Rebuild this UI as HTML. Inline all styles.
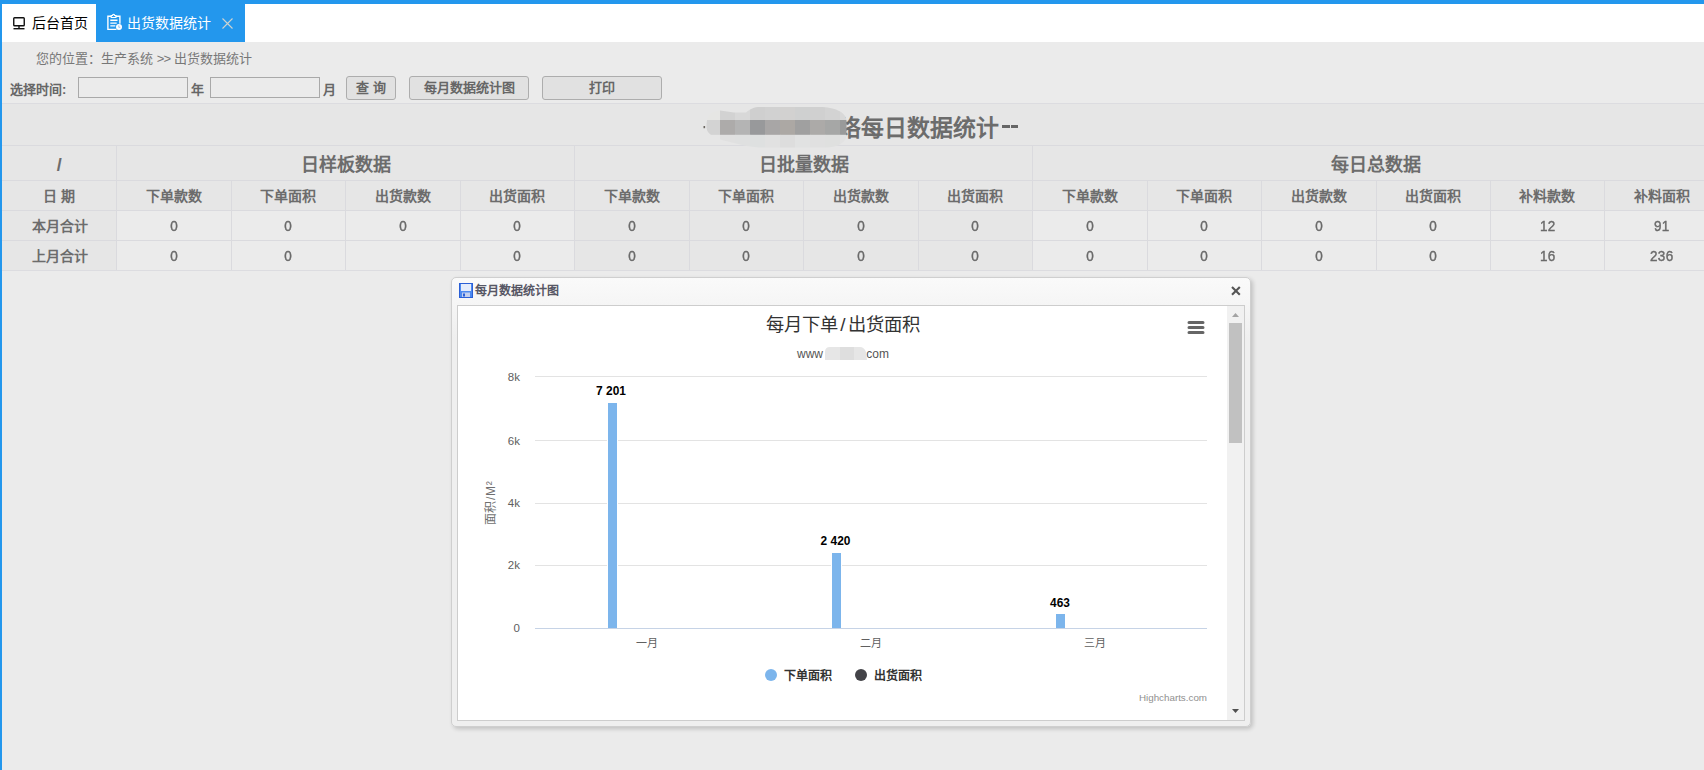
<!DOCTYPE html>
<html lang="zh-CN">
<head>
<meta charset="utf-8">
<title>出货数据统计</title>
<style>
*{box-sizing:border-box;margin:0;padding:0}
html,body{width:1704px;height:770px;overflow:hidden}
body{position:relative;background:#ebebeb;font-family:"Liberation Sans",sans-serif;font-size:13px;color:#666}
.abs{position:absolute}
#topbar{left:0;top:0;width:1704px;height:4px;background:#2397ed}
#leftbar{left:0;top:0;width:2px;height:770px;background:#2397ed}
#tabs{left:2px;top:4px;width:1702px;height:38px;background:#fff}
.tab{position:absolute;top:0;height:38px;font-size:14px;line-height:38px;white-space:nowrap}
#tab1{left:0;width:94px;color:#000}
#tab2{left:94px;width:149px;background:#2397ed;color:#fff}
#crumb{left:36px;top:50px;font-size:13px;line-height:17px;color:#777;white-space:nowrap}
.lbl{position:absolute;font-weight:bold;color:#666;font-size:13px;line-height:17px;white-space:nowrap}
.inp{position:absolute;top:77px;height:21px;width:110px;border:1px solid #a9a9a9;background:#ebebeb}
.btn{position:absolute;top:76px;height:24px;border:1px solid #adadad;border-radius:3px;background:#e1e1e1;color:#666;font-weight:bold;font-size:13px;line-height:22px;text-align:center;white-space:nowrap}
#tbl{left:2px;top:103px;width:1718px;height:168px;background:#e6e6e6;border-top:1px solid #dcdce0;border-bottom:1px solid #dcdce0}
.hl{position:absolute;left:0;width:1718px;height:1px;background:#dadade}
.vl{position:absolute;width:1px;background:#dadade}
.c{position:absolute;text-align:center;font-weight:bold;color:#6c6c6c;white-space:nowrap}
.lite{position:absolute;background:#ebebeb}
#win{left:451px;top:277px;width:800px;height:450px;border:1px solid #cfcfcf;border-radius:5px;background:linear-gradient(to bottom,#fafafa 0,#efefef 60px);box-shadow:2px 2px 4px rgba(0,0,0,.18)}
#wbody{left:5px;top:27px;width:788px;height:416px;border:1px solid #cdcdcd;background:#fff;overflow:hidden}
#sb{left:769px;top:0;width:17px;height:414px;background:#f1f1f1}
</style>
</head>
<body>
<div class="abs" id="tabs">
  <div class="tab" id="tab1">
    <svg class="abs" style="left:11px;top:13px" width="13" height="13" viewBox="0 0 13 13"><rect x="0.75" y="0.75" width="10.5" height="8" rx="0.8" fill="none" stroke="#111" stroke-width="1.4"/><rect x="5.3" y="9" width="1.4" height="2.4" fill="#111"/><rect x="0.5" y="11" width="11" height="1.4" fill="#111"/></svg>
    <span class="abs" style="left:30px;top:0">后台首页</span>
  </div>
  <div class="tab" id="tab2">
    <svg class="abs" style="left:10px;top:9px" width="17" height="18" viewBox="0 0 17 18"><path d="M5.4 3.2H1.9V16.4H10.5M9.6 3.2H13.9V10.8" fill="none" stroke="#fff" stroke-width="1.4"/><path d="M5.2 4.5V2.5h1.3a1.1 1.1 0 0 1 2.2 0h1.3v2z" fill="none" stroke="#fff" stroke-width="1.1"/><path d="M4.3 7.3h7.2M4.3 10.1h6.4M4.3 12.9h5" stroke="#fff" stroke-width="1.4"/><circle cx="13" cy="14" r="3" fill="#fff"/><path d="M12.8 12.4v1.9h1.5" stroke="#8cc0f4" stroke-width="0.9" fill="none"/></svg>
    <span class="abs" style="left:31px;top:0">出货数据统计</span>
    <svg class="abs" style="left:125px;top:13px" width="13" height="13" viewBox="0 0 13 13"><path d="M1.5 1.5l10 10M11.5 1.5l-10 10" stroke="#cfd3d0" stroke-width="1.1" fill="none"/></svg>
  </div>
</div>
<div class="abs" id="topbar"></div>
<div class="abs" id="leftbar"></div>

<div class="abs" id="crumb">您的位置：生产系统 <span style="letter-spacing:-0.8px">&gt;&gt;</span> 出货数据统计</div>
<div class="lbl" style="left:10px;top:81px">选择时间:</div>
<div class="inp" style="left:78px"></div>
<div class="lbl" style="left:191px;top:81px">年</div>
<div class="inp" style="left:210px"></div>
<div class="lbl" style="left:323px;top:81px">月</div>
<div class="btn" style="left:346px;width:50px">查 询</div>
<div class="btn" style="left:409px;width:120px">每月数据统计图</div>
<div class="btn" style="left:542px;width:120px">打印</div>

<div class="abs" id="tbl">
<div class="lite" style="left:114.0px;top:107px;width:458.0px;height:59px"></div>
<div class="lite" style="left:1030.0px;top:107px;width:687.0px;height:59px"></div>
<div class="hl" style="top:41px"></div>
<div class="hl" style="top:76px"></div>
<div class="hl" style="top:106px"></div>
<div class="hl" style="top:136px"></div>
<div class="vl" style="left:114.0px;top:41px;height:125px"></div>
<div class="vl" style="left:228.5px;top:76px;height:90px"></div>
<div class="vl" style="left:343.0px;top:76px;height:90px"></div>
<div class="vl" style="left:457.5px;top:76px;height:90px"></div>
<div class="vl" style="left:572.0px;top:41px;height:125px"></div>
<div class="vl" style="left:686.5px;top:76px;height:90px"></div>
<div class="vl" style="left:801.0px;top:76px;height:90px"></div>
<div class="vl" style="left:915.5px;top:76px;height:90px"></div>
<div class="vl" style="left:1030.0px;top:41px;height:125px"></div>
<div class="vl" style="left:1144.5px;top:76px;height:90px"></div>
<div class="vl" style="left:1259.0px;top:76px;height:90px"></div>
<div class="vl" style="left:1373.5px;top:76px;height:90px"></div>
<div class="vl" style="left:1488.0px;top:76px;height:90px"></div>
<div class="vl" style="left:1601.5px;top:76px;height:90px"></div>
<div class="c" style="left:836.1px;top:9px;font-size:22.9px;line-height:30px;text-align:left">络每日数据统计</div>
<div class="abs" style="left:1000.4px;top:20.6px;width:7.6px;height:3.2px;background:#666"></div><div class="abs" style="left:1008.7px;top:20.6px;width:7.6px;height:3.2px;background:#666"></div>
<svg class="abs" style="left:698px;top:0" width="160" height="44" viewBox="700 104 160 44">
<defs><clipPath id="bc"><path d="M706.5 127C706.5 117 709 111 720 110.5L734 112.5L746 112.5C750 109 754 107 760 107H820C834 107 846.5 112 846.5 121V135C846.5 142 838 147.5 826 147.5H764C750 147.5 742 145 734 143C722 140 706.5 137 706.5 127Z"/></clipPath>
<filter id="bl"><feGaussianBlur stdDeviation="0.5"/></filter></defs>
<g clip-path="url(#bc)"><g filter="url(#bl)">
<rect x="700" y="104" width="160" height="44" fill="#e6e6e4"/>
<rect x="700" y="120" width="20.3" height="15" fill="#d3d3d3"/>
<rect x="700" y="134.8" width="20.3" height="14" fill="#e6e6e6"/>
<rect x="720" y="104" width="15.3" height="16.2" fill="#d2d2d2"/><rect x="735" y="104" width="15.3" height="16.2" fill="#d8d8d8"/><rect x="750" y="104" width="15.3" height="16.2" fill="#cfcfcf"/><rect x="765" y="104" width="15.3" height="16.2" fill="#d1d1d1"/><rect x="780" y="104" width="15.3" height="16.2" fill="#d2d1d0"/><rect x="795" y="104" width="15.3" height="16.2" fill="#cfd0d0"/><rect x="810" y="104" width="15.3" height="16.2" fill="#d0d0d0"/><rect x="825" y="104" width="15.3" height="16.2" fill="#d3d3d3"/><rect x="840" y="104" width="15.3" height="16.2" fill="#d8d8d8"/><rect x="720" y="120" width="15.3" height="15" fill="#adabaa"/><rect x="735" y="120" width="15.3" height="15" fill="#b4b4b4"/><rect x="750" y="120" width="15.3" height="15" fill="#98999b"/><rect x="765" y="120" width="15.3" height="15" fill="#a8a6a6"/><rect x="780" y="120" width="15.3" height="15" fill="#aca8a4"/><rect x="795" y="120" width="15.3" height="15" fill="#a0a0a0"/><rect x="810" y="120" width="15.3" height="15" fill="#acaaa8"/><rect x="825" y="120" width="15.3" height="15" fill="#a6a7a6"/><rect x="840" y="120" width="15.3" height="15" fill="#999a9a"/><rect x="720" y="134.8" width="15.3" height="14" fill="#e0e0e0"/><rect x="735" y="134.8" width="15.3" height="14" fill="#dfe0e0"/><rect x="750" y="134.8" width="15.3" height="14" fill="#dee0e0"/><rect x="765" y="134.8" width="15.3" height="14" fill="#e1e1e1"/><rect x="780" y="134.8" width="15.3" height="14" fill="#dddddd"/><rect x="795" y="134.8" width="15.3" height="14" fill="#e1e2e2"/><rect x="810" y="134.8" width="15.3" height="14" fill="#e0e0e0"/><rect x="825" y="134.8" width="15.3" height="14" fill="#dfe0df"/><rect x="840" y="134.8" width="15.3" height="14" fill="#e2e2e2"/>
</g></g>
<rect x="703.5" y="126" width="1.6" height="2.2" fill="#6a6660"/>
</svg>
<div class="c" style="left:0.0px;width:114.5px;top:43.5px;height:34.0px;line-height:34.0px;font-size:18px;">/</div>
<div class="c" style="left:114.5px;width:458.0px;top:43.5px;height:34.0px;line-height:34.0px;font-size:18px;">日样板数据</div>
<div class="c" style="left:572.5px;width:458.0px;top:43.5px;height:34.0px;line-height:34.0px;font-size:18px;">日批量数据</div>
<div class="c" style="left:1030.5px;width:687.0px;top:43.5px;height:34.0px;line-height:34.0px;font-size:18px;">每日总数据</div>
<div class="c" style="left:0.0px;width:114.5px;top:78px;height:29px;line-height:29px;font-size:14px;">日 期</div>
<div class="c" style="left:114.5px;width:114.5px;top:78px;height:29px;line-height:29px;font-size:14px;">下单款数</div>
<div class="c" style="left:229.0px;width:114.5px;top:78px;height:29px;line-height:29px;font-size:14px;">下单面积</div>
<div class="c" style="left:343.5px;width:114.5px;top:78px;height:29px;line-height:29px;font-size:14px;">出货款数</div>
<div class="c" style="left:458.0px;width:114.5px;top:78px;height:29px;line-height:29px;font-size:14px;">出货面积</div>
<div class="c" style="left:572.5px;width:114.5px;top:78px;height:29px;line-height:29px;font-size:14px;">下单款数</div>
<div class="c" style="left:687.0px;width:114.5px;top:78px;height:29px;line-height:29px;font-size:14px;">下单面积</div>
<div class="c" style="left:801.5px;width:114.5px;top:78px;height:29px;line-height:29px;font-size:14px;">出货款数</div>
<div class="c" style="left:916.0px;width:114.5px;top:78px;height:29px;line-height:29px;font-size:14px;">出货面积</div>
<div class="c" style="left:1030.5px;width:114.5px;top:78px;height:29px;line-height:29px;font-size:14px;">下单款数</div>
<div class="c" style="left:1145.0px;width:114.5px;top:78px;height:29px;line-height:29px;font-size:14px;">下单面积</div>
<div class="c" style="left:1259.5px;width:114.5px;top:78px;height:29px;line-height:29px;font-size:14px;">出货款数</div>
<div class="c" style="left:1374.0px;width:114.5px;top:78px;height:29px;line-height:29px;font-size:14px;">出货面积</div>
<div class="c" style="left:1488.5px;width:113.5px;top:78px;height:29px;line-height:29px;font-size:14px;">补料款数</div>
<div class="c" style="left:1602.0px;width:115.5px;top:78px;height:29px;line-height:29px;font-size:14px;">补料面积</div>
<div class="c" style="left:1.0px;width:114.5px;top:108px;height:29px;line-height:29px;font-size:14px;">本月合计</div>
<div class="c" style="left:114.5px;width:114.5px;top:107.5px;height:29.0px;line-height:29.0px;font-size:14.5px;font-weight:normal;-webkit-text-stroke:0.4px #666;transform:scaleX(.93);letter-spacing:0.3px;">0</div>
<div class="c" style="left:229.0px;width:114.5px;top:107.5px;height:29.0px;line-height:29.0px;font-size:14.5px;font-weight:normal;-webkit-text-stroke:0.4px #666;transform:scaleX(.93);letter-spacing:0.3px;">0</div>
<div class="c" style="left:343.5px;width:114.5px;top:107.5px;height:29.0px;line-height:29.0px;font-size:14.5px;font-weight:normal;-webkit-text-stroke:0.4px #666;transform:scaleX(.93);letter-spacing:0.3px;">0</div>
<div class="c" style="left:458.0px;width:114.5px;top:107.5px;height:29.0px;line-height:29.0px;font-size:14.5px;font-weight:normal;-webkit-text-stroke:0.4px #666;transform:scaleX(.93);letter-spacing:0.3px;">0</div>
<div class="c" style="left:572.5px;width:114.5px;top:107.5px;height:29.0px;line-height:29.0px;font-size:14.5px;font-weight:normal;-webkit-text-stroke:0.4px #666;transform:scaleX(.93);letter-spacing:0.3px;">0</div>
<div class="c" style="left:687.0px;width:114.5px;top:107.5px;height:29.0px;line-height:29.0px;font-size:14.5px;font-weight:normal;-webkit-text-stroke:0.4px #666;transform:scaleX(.93);letter-spacing:0.3px;">0</div>
<div class="c" style="left:801.5px;width:114.5px;top:107.5px;height:29.0px;line-height:29.0px;font-size:14.5px;font-weight:normal;-webkit-text-stroke:0.4px #666;transform:scaleX(.93);letter-spacing:0.3px;">0</div>
<div class="c" style="left:916.0px;width:114.5px;top:107.5px;height:29.0px;line-height:29.0px;font-size:14.5px;font-weight:normal;-webkit-text-stroke:0.4px #666;transform:scaleX(.93);letter-spacing:0.3px;">0</div>
<div class="c" style="left:1030.5px;width:114.5px;top:107.5px;height:29.0px;line-height:29.0px;font-size:14.5px;font-weight:normal;-webkit-text-stroke:0.4px #666;transform:scaleX(.93);letter-spacing:0.3px;">0</div>
<div class="c" style="left:1145.0px;width:114.5px;top:107.5px;height:29.0px;line-height:29.0px;font-size:14.5px;font-weight:normal;-webkit-text-stroke:0.4px #666;transform:scaleX(.93);letter-spacing:0.3px;">0</div>
<div class="c" style="left:1259.5px;width:114.5px;top:107.5px;height:29.0px;line-height:29.0px;font-size:14.5px;font-weight:normal;-webkit-text-stroke:0.4px #666;transform:scaleX(.93);letter-spacing:0.3px;">0</div>
<div class="c" style="left:1374.0px;width:114.5px;top:107.5px;height:29.0px;line-height:29.0px;font-size:14.5px;font-weight:normal;-webkit-text-stroke:0.4px #666;transform:scaleX(.93);letter-spacing:0.3px;">0</div>
<div class="c" style="left:1488.5px;width:113.5px;top:107.5px;height:29.0px;line-height:29.0px;font-size:14.5px;font-weight:normal;-webkit-text-stroke:0.4px #666;transform:scaleX(.93);letter-spacing:0.3px;">12</div>
<div class="c" style="left:1602.0px;width:115.5px;top:107.5px;height:29.0px;line-height:29.0px;font-size:14.5px;font-weight:normal;-webkit-text-stroke:0.4px #666;transform:scaleX(.93);letter-spacing:0.3px;">91</div>
<div class="c" style="left:1.0px;width:114.5px;top:138px;height:29px;line-height:29px;font-size:14px;">上月合计</div>
<div class="c" style="left:114.5px;width:114.5px;top:137.5px;height:29.0px;line-height:29.0px;font-size:14.5px;font-weight:normal;-webkit-text-stroke:0.4px #666;transform:scaleX(.93);letter-spacing:0.3px;">0</div>
<div class="c" style="left:229.0px;width:114.5px;top:137.5px;height:29.0px;line-height:29.0px;font-size:14.5px;font-weight:normal;-webkit-text-stroke:0.4px #666;transform:scaleX(.93);letter-spacing:0.3px;">0</div>
<div class="c" style="left:343.5px;width:114.5px;top:137.5px;height:29.0px;line-height:29.0px;font-size:14.5px;font-weight:normal;-webkit-text-stroke:0.4px #666;transform:scaleX(.93);letter-spacing:0.3px;"></div>
<div class="c" style="left:458.0px;width:114.5px;top:137.5px;height:29.0px;line-height:29.0px;font-size:14.5px;font-weight:normal;-webkit-text-stroke:0.4px #666;transform:scaleX(.93);letter-spacing:0.3px;">0</div>
<div class="c" style="left:572.5px;width:114.5px;top:137.5px;height:29.0px;line-height:29.0px;font-size:14.5px;font-weight:normal;-webkit-text-stroke:0.4px #666;transform:scaleX(.93);letter-spacing:0.3px;">0</div>
<div class="c" style="left:687.0px;width:114.5px;top:137.5px;height:29.0px;line-height:29.0px;font-size:14.5px;font-weight:normal;-webkit-text-stroke:0.4px #666;transform:scaleX(.93);letter-spacing:0.3px;">0</div>
<div class="c" style="left:801.5px;width:114.5px;top:137.5px;height:29.0px;line-height:29.0px;font-size:14.5px;font-weight:normal;-webkit-text-stroke:0.4px #666;transform:scaleX(.93);letter-spacing:0.3px;">0</div>
<div class="c" style="left:916.0px;width:114.5px;top:137.5px;height:29.0px;line-height:29.0px;font-size:14.5px;font-weight:normal;-webkit-text-stroke:0.4px #666;transform:scaleX(.93);letter-spacing:0.3px;">0</div>
<div class="c" style="left:1030.5px;width:114.5px;top:137.5px;height:29.0px;line-height:29.0px;font-size:14.5px;font-weight:normal;-webkit-text-stroke:0.4px #666;transform:scaleX(.93);letter-spacing:0.3px;">0</div>
<div class="c" style="left:1145.0px;width:114.5px;top:137.5px;height:29.0px;line-height:29.0px;font-size:14.5px;font-weight:normal;-webkit-text-stroke:0.4px #666;transform:scaleX(.93);letter-spacing:0.3px;">0</div>
<div class="c" style="left:1259.5px;width:114.5px;top:137.5px;height:29.0px;line-height:29.0px;font-size:14.5px;font-weight:normal;-webkit-text-stroke:0.4px #666;transform:scaleX(.93);letter-spacing:0.3px;">0</div>
<div class="c" style="left:1374.0px;width:114.5px;top:137.5px;height:29.0px;line-height:29.0px;font-size:14.5px;font-weight:normal;-webkit-text-stroke:0.4px #666;transform:scaleX(.93);letter-spacing:0.3px;">0</div>
<div class="c" style="left:1488.5px;width:113.5px;top:137.5px;height:29.0px;line-height:29.0px;font-size:14.5px;font-weight:normal;-webkit-text-stroke:0.4px #666;transform:scaleX(.93);letter-spacing:0.3px;">16</div>
<div class="c" style="left:1602.0px;width:115.5px;top:137.5px;height:29.0px;line-height:29.0px;font-size:14.5px;font-weight:normal;-webkit-text-stroke:0.4px #666;transform:scaleX(.93);letter-spacing:0.3px;">236</div>
</div>
<div class="abs" id="win">
  <svg class="abs" style="left:7px;top:5px" width="16" height="16" viewBox="0 0 16 16">
    <rect x="0.5" y="0.5" width="13" height="14" fill="#4d8af0" stroke="#2b5fd6" stroke-width="1"/>
    <rect x="2" y="1" width="10" height="7" fill="#e4ecfb"/>
    <rect x="3" y="9.5" width="8" height="4.5" fill="#c3d0ee"/>
    <rect x="4" y="10.5" width="2" height="3" fill="#2b5fd6"/>
  </svg>
  <div class="abs" style="left:23px;top:5px;font-size:12px;line-height:16px;font-weight:bold;color:#575765;white-space:nowrap">每月数据统计图</div>
  <svg class="abs" style="left:778.4px;top:7.2px" width="12" height="12" viewBox="0 0 12 12"><path d="M2 2l7.8 7.8M9.8 2l-7.8 7.8" stroke="#555" stroke-width="2.1" fill="none"/></svg>
  <div class="abs" id="wbody">
    <svg class="abs" style="left:0;top:0" width="769" height="414" viewBox="458 306 769 414" font-family="Liberation Sans, sans-serif">
      <!-- gridlines -->
      <g fill="#e3e3e3">
        <rect x="535" y="376" width="672" height="1"/>
        <rect x="535" y="440" width="672" height="1"/>
        <rect x="535" y="503" width="672" height="1"/>
        <rect x="535" y="565" width="672" height="1"/>
      </g>
      <rect x="535" y="628" width="672" height="1" fill="#c6d3e6"/>
      <!-- bars -->
      <g fill="#7cb5ec" stroke="#fff" stroke-width="1">
        <rect x="607.5" y="402.5" width="10" height="226"/>
        <rect x="831.5" y="552.5" width="10" height="76"/>
        <rect x="1055.5" y="613.5" width="10" height="15"/>
      </g>
      <rect x="535" y="628" width="672" height="1" fill="#c6d3e6"/>
      <!-- title -->
      <text x="765.5" y="330.6" font-size="18.3" fill="#333">每月下单</text><text x="843" y="330.6" text-anchor="middle" font-size="19" fill="#333">/</text><text x="847.5" y="330.6" font-size="18.3" fill="#333">出货面积</text>
      <text x="797" y="358" font-size="12" fill="#555">www</text>
      <text x="889" y="358" font-size="12" fill="#555" text-anchor="end">com</text>
      <path d="M825 360V352q0-5 5-5h30q4 0 6 5l1 8z" fill="#e6e6e6"/>
      <rect x="840" y="347" width="14" height="13" fill="#dedede"/>
      <!-- menu -->
      <g stroke="#666" stroke-width="3" stroke-linecap="round"><path d="M1189 322.5h14M1189 327.5h14M1189 332.5h14"/></g>
      <!-- y labels -->
      <g font-size="11.5" fill="#606060" text-anchor="end">
        <text x="520" y="381">8k</text>
        <text x="520" y="445">6k</text>
        <text x="520" y="507">4k</text>
        <text x="520" y="569">2k</text>
        <text x="520" y="632">0</text>
      </g>
      <text transform="translate(495,503) rotate(-90)" text-anchor="middle" font-size="12" fill="#707070" letter-spacing="0.7">面积/M²</text>
      <!-- x labels -->
      <g font-size="11" fill="#606060" text-anchor="middle">
        <text x="647" y="647">一月</text>
        <text x="871" y="647">二月</text>
        <text x="1095" y="647">三月</text>
      </g>
      <!-- data labels -->
      <g font-size="11.9" font-weight="bold" fill="#000" text-anchor="middle">
        <text x="611" y="395.3">7 201</text>
        <text x="835.5" y="545.4">2 420</text>
        <text x="1060" y="606.5">463</text>
      </g>
      <!-- legend -->
      <circle cx="771" cy="675" r="6" fill="#7cb5ec"/>
      <text x="784" y="680" font-size="12" font-weight="bold" fill="#333">下单面积</text>
      <circle cx="861" cy="675" r="6" fill="#434348"/>
      <text x="874" y="680" font-size="12" font-weight="bold" fill="#333">出货面积</text>
      <text x="1207" y="701" font-size="9.8" fill="#909090" text-anchor="end">Highcharts.com</text>
    </svg>
    <div class="abs" id="sb">
      <svg class="abs" style="left:5px;top:6.6px" width="7" height="4" viewBox="0 0 7 4"><path d="M0 4L3.5 0L7 4z" fill="#a3a3a3"/></svg>
      <div class="abs" style="left:2px;top:17px;width:13px;height:120px;background:#c1c1c1"></div>
      <svg class="abs" style="left:5px;top:403px" width="7" height="4" viewBox="0 0 7 4"><path d="M0 0L3.5 4L7 0z" fill="#505050"/></svg>
    </div>
  </div>
</div>

</body>
</html>
